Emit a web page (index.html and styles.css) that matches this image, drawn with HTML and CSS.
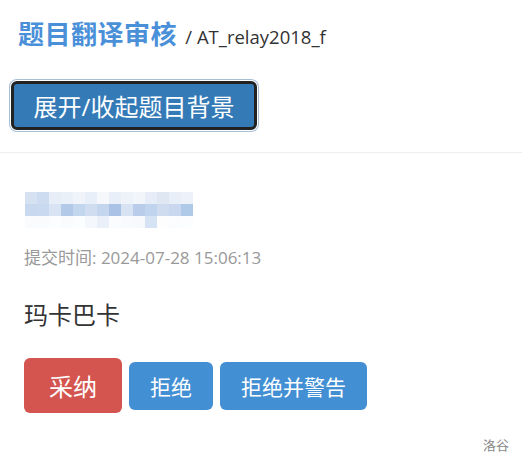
FILE: index.html
```html
<!DOCTYPE html>
<html lang="zh-CN">
<head>
  <meta charset="UTF-8" />
  <title>题目翻译审核</title>
  <link rel="stylesheet" href="styles.css">
</head>
<body>
<header class="page-head">
  <h1><span class="title">题目翻译审核</span> <span class="sub">/ AT_relay2018_f</span></h1>
  <button type="button" class="toggle-btn">展开/收起题目背景</button>
</header>
<main class="review">
  <div class="mosaic">
    <i style="background:#d6e2f2"></i><i style="background:#cddcf0"></i><i style="background:#e8eef8"></i><i style="background:#eaf0f8"></i><i style="background:#f0f3f9"></i><i style="background:#e8eff8"></i><i style="background:#f6f8fc"></i><i style="background:#e9eff8"></i><i style="background:#eef2f9"></i><i style="background:#f2f5fa"></i><i style="background:#e6edf8"></i><i style="background:#dfe7f3"></i><i style="background:#e9eff8"></i><i style="background:#edf2fa"></i>
    <i style="background:#c8d9ef"></i><i style="background:#c9daf0"></i><i style="background:#d8e3f3"></i><i style="background:#b3c9e8"></i><i style="background:#c2d6ee"></i><i style="background:#d0dcef"></i><i style="background:#c3d6ee"></i><i style="background:#a9c2e5"></i><i style="background:#d7e2f3"></i><i style="background:#b9cdea"></i><i style="background:#c0d4ee"></i><i style="background:#cfdcf0"></i><i style="background:#c9d8ef"></i><i style="background:#afc9e9"></i>
    <i style="background:#fafbfd"></i><i style="background:#fafbfd"></i><i style="background:#fcfdfe"></i><i style="background:#fafbfd"></i><i style="background:#fcfdfe"></i><i style="background:#f4f7fc"></i><i style="background:#e9f0fa"></i><i style="background:#fbfcfe"></i><i style="background:#f8fafd"></i><i style="background:#f7f9fc"></i><i style="background:#d6e3f4"></i><i style="background:#fdfdfe"></i><i style="background:#fbfcfd"></i><i style="background:#fcfdfe"></i>
  </div>
  <p class="time">提交时间: 2024-07-28 15:06:13</p>
  <p class="content">玛卡巴卡</p>
  <div class="actions">
    <button type="button" class="btn btn-accept">采纳</button>
    <button type="button" class="btn btn-reject">拒绝</button>
    <button type="button" class="btn btn-reject">拒绝并警告</button>
  </div>
</main>
<footer class="brand">洛谷</footer>
</body>
</html>
```

FILE: styles.css
```css
body {
  font-family: "Open Sans", "Noto Sans CJK SC", sans-serif;
  margin: 0;
  padding: 0;
  background-color: #fff;
  color: #333;
  width: 522px;
  height: 465px;
  overflow: hidden;
}
.page-head {
  padding: 14px 0 0 8px;
  border-bottom: 1px solid #eee;
  height: 153px;
  box-sizing: border-box;
}
h1 {
  margin: 0 0 0 10px;
  font-weight: normal;
  line-height: 36px;
  white-space: nowrap;
}
.title {
  font-size: 26px;
  font-weight: 700;
  color: #4a90d9;
  letter-spacing: 0.5px;
}
.sub {
  font-size: 18.5px;
  color: #333;
}
.toggle-btn {
  margin: 26px 0 0 3px;
  width: 246px;
  height: 49px;
  padding: 0;
  font-family: inherit;
  font-size: 24px;
  color: #fff;
  background-color: #337ab7;
  border: 3px solid #222;
  border-radius: 6px;
  box-shadow: 0 0 0 1px #fff, 0 0 0 2px #a6bfd9;
  cursor: pointer;
}
.review {
  padding: 39px 0 0 24px;
}
.mosaic {
  display: grid;
  grid-template-columns: repeat(14, 12px);
  grid-auto-rows: 12px;
  margin-left: 1px;
}
.time {
  margin: 18px 0 0;
  font-size: 17px;
  line-height: 24px;
  color: #999;
}
.content {
  margin: 29px 0 0;
  font-size: 24px;
  line-height: 32px;
  color: #333;
}
.actions {
  display: flex;
  align-items: center;
  gap: 7px;
  margin-top: 27px;
}
.btn {
  border: none;
  color: #fff;
  font-family: inherit;
  cursor: pointer;
  padding: 0 21px;
}
.btn-accept {
  background-color: #d45550;
  font-size: 24px;
  height: 55px;
  width: 98px;
  border-radius: 6px;
}
.btn-reject {
  background-color: #428fd4;
  font-size: 21px;
  height: 48px;
  border-radius: 6px;
}
.brand {
  text-align: right;
  padding-right: 13px;
  margin-top: 22px;
  font-size: 13px;
  color: #888;
}
```
